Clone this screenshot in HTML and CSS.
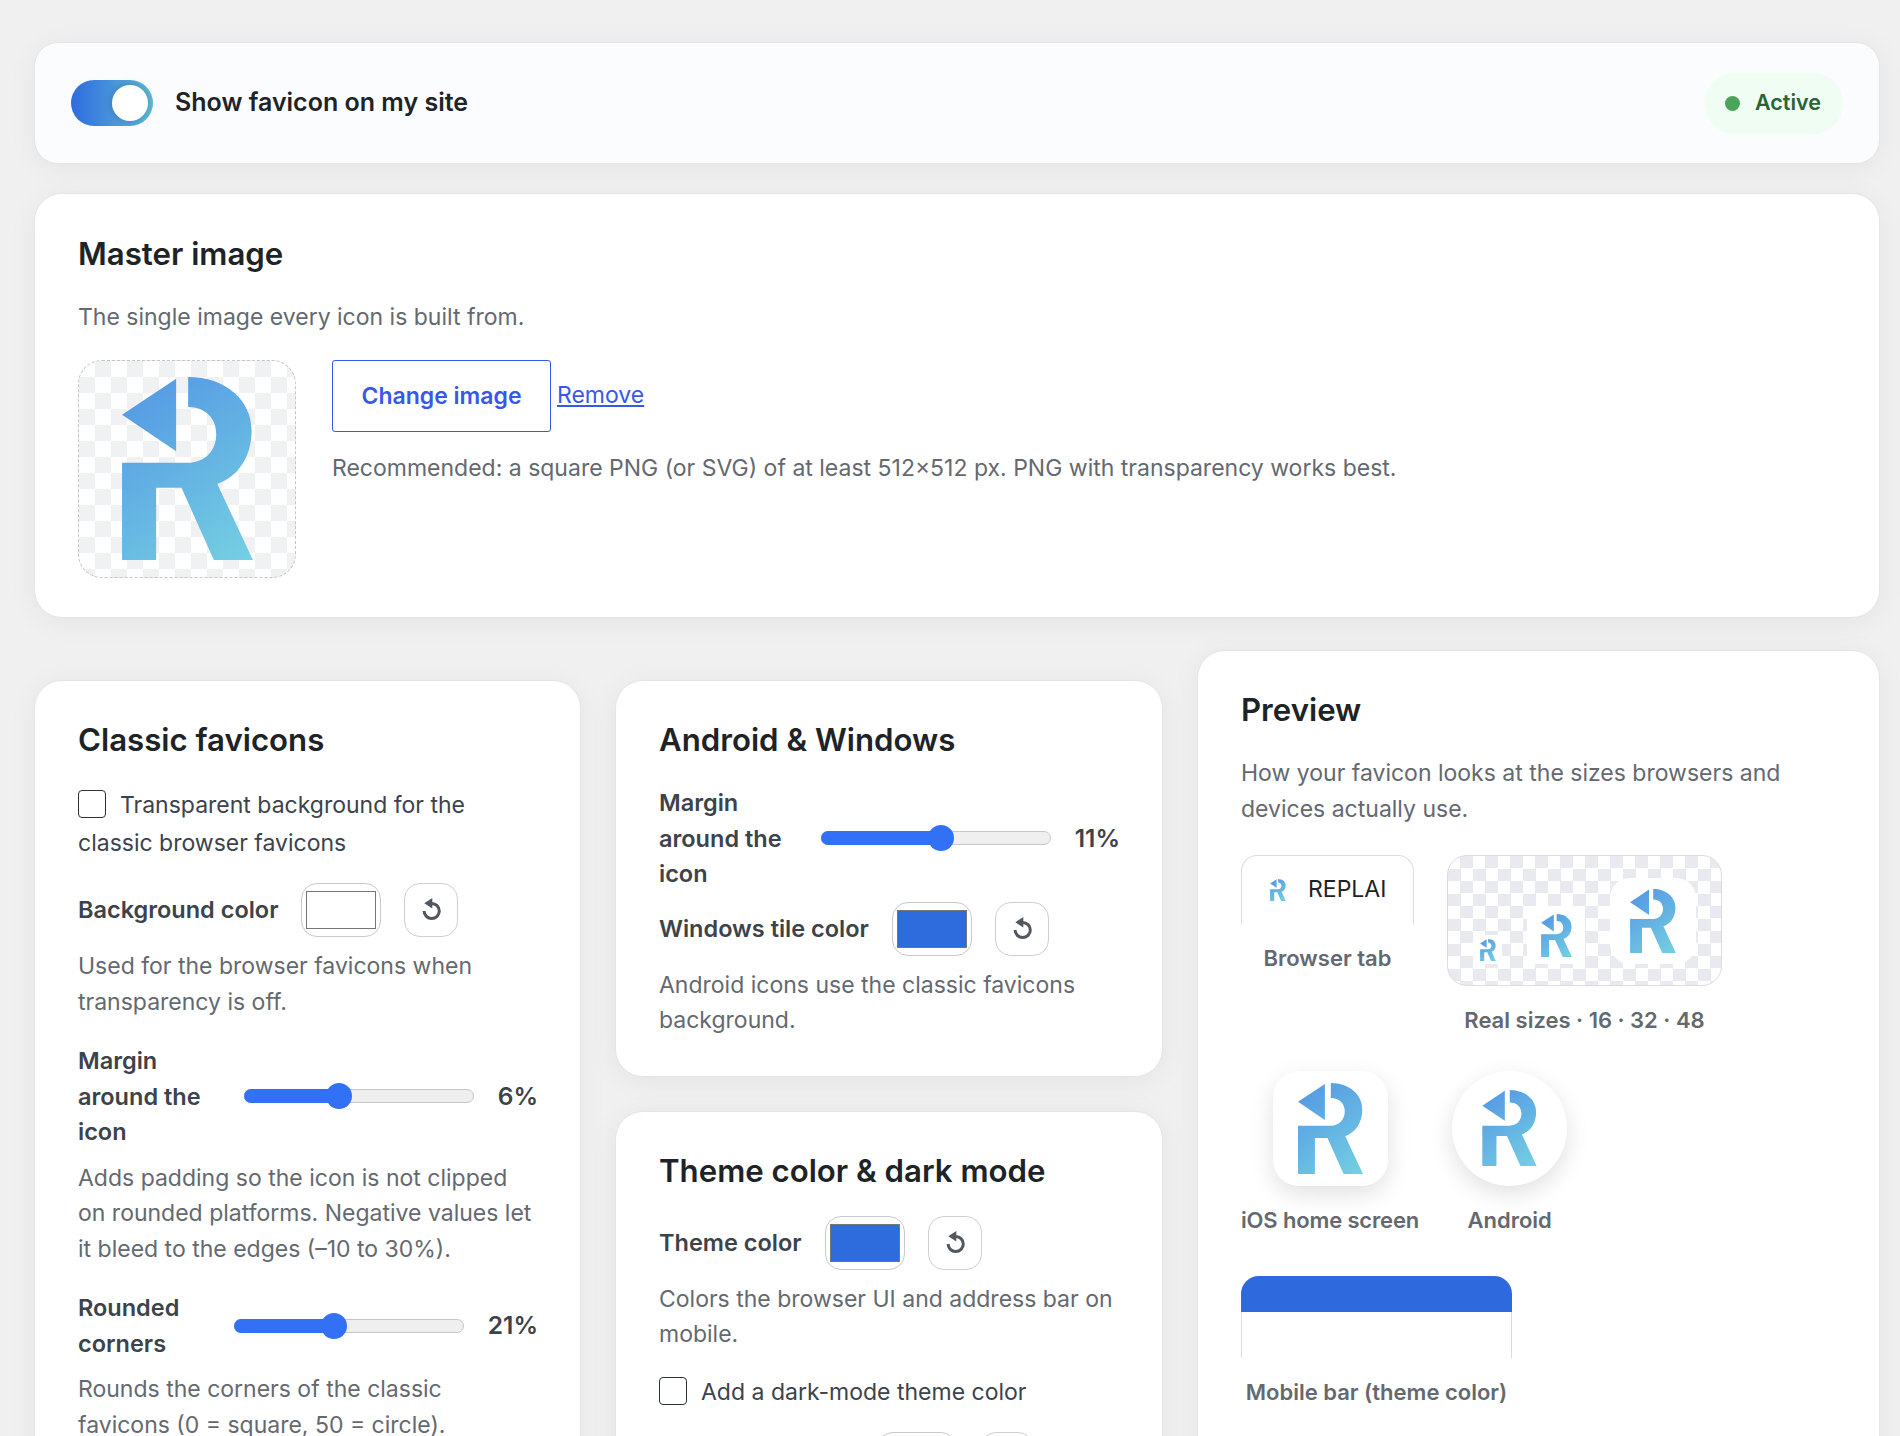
FILE: index.html
```html
<!DOCTYPE html>
<html lang="en">
<head>
    <meta charset="UTF-8">
    <meta name="viewport" content="width=device-width, initial-scale=1.0">
    <title>Favicon settings</title>
    <link rel="stylesheet" href="styles.css">
</head>
<body>
    <!-- shared drawings -->
    <svg class="defs" width="0" height="0">
        <defs>
            <linearGradient id="logo-grad" gradientUnits="userSpaceOnUse" x1="155" y1="80" x2="547" y2="628">
                <stop offset="0" stop-color="#5295e4"/>
                <stop offset="1" stop-color="#75d0e2"/>
            </linearGradient>
            <symbol id="logo" viewBox="155 80 392 548">
                <path fill="url(#logo-grad)" d="M155 193 317 85V302Z"/>
                <path fill="url(#logo-grad)" d="M353 80C465 80 543 150 543 240C543 320 500 380 440 400L547 628H430L333 412H257V628H155V337H350C405 337 437 300 437 250C437 205 405 170 353 170Z"/>
            </symbol>
            <symbol id="reset" viewBox="0 0 24 24">
                <path fill="none" stroke="currentColor" stroke-width="3" d="M12.7 5.4A7.6 7.6 0 1 1 5.1 13"/>
                <path fill="currentColor" d="M13.3 0V10.4L5.3 5.3Z"/>
            </symbol>
        </defs>
    </svg>

    <div class="page">
        <div class="card status-card">
            <span class="toggle"><span class="toggle-knob"></span></span>
            <span class="status-label">Show favicon on my site</span>
            <span class="pill"><span class="pill-dot"></span>Active</span>
        </div>

        <div class="card master-card">
            <h2>Master image</h2>
            <p class="help">The single image every icon is built from.</p>
            <div class="master-row">
                <div class="master-thumb checker">
                    <svg class="master-logo"><use href="#logo"/></svg>
                </div>
                <div class="master-side">
                    <div class="master-actions">
                        <button class="button-outline">Change image</button>
                        <a class="link" href="#">Remove</a>
                    </div>
                    <p class="help">Recommended: a square PNG (or SVG) of at least 512×512 px. PNG with transparency works best.</p>
                </div>
            </div>
        </div>

        <div class="columns">
            <div class="column column-low">
                <div class="card">
                    <h2>Classic favicons</h2>
                    <label class="check-line"><span class="checkbox"></span>Transparent background for the classic browser favicons</label>
                    <div class="field-row color-row">
                        <span class="field-label">Background color</span>
                        <span class="swatch-wrap"><span class="swatch swatch-white"></span></span>
                        <button class="reset"><svg class="reset-icon"><use href="#reset"/></svg></button>
                    </div>
                    <p class="help">Used for the browser favicons when transparency is off.</p>
                    <div class="field-row slider-row">
                        <span class="field-label label-narrow">Margin around the icon</span>
                        <span class="slider"><span class="slider-fill fill-a"></span><span class="slider-knob"></span></span>
                        <span class="slider-value">6%</span>
                    </div>
                    <p class="help">Adds padding so the icon is not clipped on rounded platforms. Negative values let it bleed to the edges (–10 to 30%).</p>
                    <div class="field-row slider-row">
                        <span class="field-label label-narrow">Rounded corners</span>
                        <span class="slider"><span class="slider-fill fill-b"></span><span class="slider-knob"></span></span>
                        <span class="slider-value">21%</span>
                    </div>
                    <p class="help">Rounds the corners of the classic favicons (0 = square, 50 = circle).</p>
                </div>
            </div>

            <div class="column column-low">
                <div class="card card-short">
                    <h2>Android &amp; Windows</h2>
                    <div class="field-row slider-row">
                        <span class="field-label label-narrow">Margin around the icon</span>
                        <span class="slider"><span class="slider-fill fill-c"></span><span class="slider-knob"></span></span>
                        <span class="slider-value">11%</span>
                    </div>
                    <div class="field-row color-row color-row-tight">
                        <span class="field-label">Windows tile color</span>
                        <span class="swatch-wrap"><span class="swatch"></span></span>
                        <button class="reset"><svg class="reset-icon"><use href="#reset"/></svg></button>
                    </div>
                    <p class="help">Android icons use the classic favicons background.</p>
                </div>
                <div class="card">
                    <h2>Theme color &amp; dark mode</h2>
                    <div class="field-row color-row">
                        <span class="field-label">Theme color</span>
                        <span class="swatch-wrap"><span class="swatch"></span></span>
                        <button class="reset"><svg class="reset-icon"><use href="#reset"/></svg></button>
                    </div>
                    <p class="help">Colors the browser UI and address bar on mobile.</p>
                    <label class="check-line check-line-low"><span class="checkbox"></span>Add a dark-mode theme color</label>
                    <div class="field-row color-row">
                        <span class="field-label">Dark theme color</span>
                        <span class="swatch-wrap"><span class="swatch swatch-dark"></span></span>
                        <button class="reset"><svg class="reset-icon"><use href="#reset"/></svg></button>
                    </div>
                </div>
            </div>

            <div class="column">
                <div class="card preview-card">
                    <h2>Preview</h2>
                    <p class="help">How your favicon looks at the sizes browsers and devices actually use.</p>
                    <div class="preview-grid">
                        <div class="preview-item">
                            <div class="browser-tab">
                                <svg class="tab-logo"><use href="#logo"/></svg>
                                <span>REPLAI</span>
                            </div>
                            <span class="caption">Browser tab</span>
                        </div>
                        <div class="preview-item">
                            <div class="real-sizes checker">
                                <span class="real-box real-16"><svg><use href="#logo"/></svg></span>
                                <span class="real-box real-32"><svg><use href="#logo"/></svg></span>
                                <span class="real-box real-48"><svg><use href="#logo"/></svg></span>
                            </div>
                            <span class="caption">Real sizes · 16 · 32 · 48</span>
                        </div>
                        <div class="preview-item">
                            <div class="home-icon home-ios"><svg><use href="#logo"/></svg></div>
                            <span class="caption caption-tight">iOS home screen</span>
                        </div>
                        <div class="preview-item">
                            <div class="home-icon home-android"><svg><use href="#logo"/></svg></div>
                            <span class="caption">Android</span>
                        </div>
                        <div class="preview-item mobile-item">
                            <div class="mobile-bar"><div class="mobile-bar-top"></div></div>
                            <span class="caption">Mobile bar (theme color)</span>
                        </div>
                    </div>
                </div>
            </div>
        </div>
    </div>
</body>
</html>
```

FILE: styles.css
```css
* {
    margin: 0;
    padding: 0;
    box-sizing: border-box;
}

html,
body {
    height: 1436px;
    overflow: hidden;
}

body {
    background-color: #f0f0f1;
    color: #3c434a;
    font-family: Inter, "Noto Sans", sans-serif;
    font-size: 23px;
    line-height: 35.5px;
}

.defs {
    position: absolute;
}

.page {
    padding: 42px 20px 0 34px;
}

.card {
    background-color: #fff;
    border: 1px solid #e4e5e8;
    border-radius: 28px;
    padding: 39px 43px;
    box-shadow: 0 4px 30px rgba(0, 0, 0, 0.05);
}

.card-short {
    padding-bottom: 37px;
}

h2 {
    color: #1d2327;
    font-size: 31.2px;
    font-weight: 600;
    line-height: 40px;
}

h2 + .help {
    margin-top: 26px;
}

.help {
    color: #646970;
}

/* 顶部开关 */
.status-card {
    display: flex;
    align-items: center;
    height: 122px;
    padding: 0 36px 0 36px;
    background-color: #fbfcfe;
    border-radius: 24px;
}

.toggle {
    display: flex;
    align-items: center;
    justify-content: flex-end;
    width: 82px;
    height: 46px;
    padding-right: 5px;
    border-radius: 23px;
    background: linear-gradient(90deg, #2f6bdf, #5fbcd8);
}

.toggle-knob {
    width: 36px;
    height: 36px;
    border-radius: 50%;
    background-color: #fff;
    box-shadow: 0 0 8px rgba(0, 0, 0, 0.2);
}

.status-label {
    margin-left: 22px;
    color: #1d2327;
    font-size: 25px;
    font-weight: 600;
}

.pill {
    display: flex;
    align-items: center;
    gap: 15px;
    height: 61px;
    margin-left: auto;
    padding: 0 22px 0 20px;
    border-radius: 31px;
    background-color: #effdf3;
    color: #2a6336;
    font-size: 21.5px;
    font-weight: 600;
}

.pill-dot {
    width: 15px;
    height: 15px;
    border-radius: 50%;
    background-color: #4aa557;
}

/* 主图 */
.master-card {
    margin-top: 29px;
    height: 425px;
    padding-top: 40px;
}

.master-row {
    display: flex;
    gap: 36px;
    margin-top: 24px;
}

.checker {
    background-color: #fff;
    background-image: conic-gradient(#f0f1f3 25%, #fff 0 50%, #f0f1f3 0 75%, #fff 0);
    background-size: 32px 32px;
}

.master-thumb {
    display: flex;
    align-items: center;
    justify-content: center;
    width: 218px;
    height: 218px;
    border: 1px dashed #c3c4cc;
    border-radius: 24px;
}

.master-logo {
    width: 131px;
    height: 183px;
}

.master-actions {
    display: flex;
    align-items: center;
    gap: 6px;
}

.button-outline {
    width: 219px;
    height: 72px;
    border: 1.5px solid #3858e9;
    border-radius: 3px;
    background-color: #fff;
    color: #3858e9;
    font: 600 23px Inter, sans-serif;
}

.link {
    color: #3858e9;
}

.master-side .help {
    margin-top: 19px;
}

/* 三列 */
.columns {
    display: grid;
    grid-template-columns: 547px 548px 683px;
    gap: 34px;
    align-items: start;
    margin-top: 32px;
}

.column {
    display: flex;
    flex-direction: column;
    gap: 34px;
}

.column-low {
    padding-top: 30px;
}

.check-line {
    display: block;
    margin-top: 26px;
    line-height: 38px;
}

.check-line-low {
    margin-top: 20px;
}

.checkbox {
    display: inline-block;
    width: 28px;
    height: 28px;
    margin-right: 14px;
    border: 1.5px solid #2c3338;
    border-radius: 4px;
    vertical-align: -5px;
}

.field-row {
    display: flex;
    align-items: center;
}

.field-label {
    font-size: 23.5px;
    font-weight: 600;
    flex-shrink: 0;
}

.label-narrow {
    width: 130px;
}

.color-row {
    gap: 23px;
    margin-top: 21px;
}

.color-row .field-label {
    line-height: 30px;
}

h2 + .color-row {
    margin-top: 25px;
}

.color-row + .help {
    margin-top: 12px;
}

.color-row-tight {
    margin-top: 10px;
}

.swatch-wrap {
    display: flex;
    align-items: center;
    justify-content: center;
    width: 80px;
    height: 54px;
    border: 1px solid #c9c9c9;
    border-radius: 16px;
    background-color: #fff;
}

.swatch {
    width: 70px;
    height: 38px;
    border: 1px solid #767676;
    background-color: #2e6bdd;
}

.swatch-white {
    background-color: #fff;
}

.swatch-dark {
    background-color: #1d2327;
}

.reset {
    display: flex;
    align-items: center;
    justify-content: center;
    width: 54px;
    height: 54px;
    border: 1px solid #cfcfcf;
    border-radius: 16px;
    background-color: #fff;
    color: #50575e;
}

.reset-icon {
    width: 24px;
    height: 24px;
}

.slider-row {
    gap: 24px;
    margin-top: 23px;
}

h2 + .slider-row {
    margin-top: 25px;
}

.slider-row + .help {
    margin-top: 11px;
}

.slider {
    position: relative;
    flex: none;
    width: 230px;
    height: 14px;
    margin-left: auto;
    border: 1px solid #c6c6c6;
    border-radius: 7px;
    background-color: #efefef;
}

.slider-fill {
    display: block;
    height: 14px;
    margin: -1px;
    border-radius: 7px;
    background-color: #3271f6;
}

.fill-a { width: 42%; }
.fill-b { width: 43%; }
.fill-c { width: 52%; }

/* 滑块圆点叠在轨道上 */
.slider-knob {
    position: absolute;
    top: -7px;
    width: 26px;
    height: 26px;
    border-radius: 50%;
    background-color: #3271f6;
}

.fill-a + .slider-knob { left: 81px; }
.fill-b + .slider-knob { left: 86px; }
.fill-c + .slider-knob { left: 106px; }

.slider-value {
    margin-right: -1px;
    font-size: 24.5px;
    font-weight: 600;
    flex-shrink: 0;
}

/* 预览 */
.preview-card {
    min-height: 900px;
}

.preview-grid {
    display: flex;
    flex-wrap: wrap;
    gap: 32px 33px;
    margin-top: 28px;
}

.preview-item {
    display: flex;
    flex-direction: column;
    align-items: center;
}

.mobile-item {
    margin-top: 6px;
}

.caption {
    margin-top: 17px;
    color: #646970;
    font-size: 22px;
    font-weight: 600;
}

.caption-tight {
    letter-spacing: -0.15px;
}

.browser-tab {
    display: flex;
    align-items: center;
    gap: 22px;
    width: 173px;
    height: 69px;
    padding-left: 28px;
    border: 1px solid #dcdcde;
    border-bottom: 0;
    border-radius: 16px 16px 0 0;
    color: #1d2327;
}

.tab-logo {
    width: 16px;
    height: 22px;
    filter: blur(0.3px);
}

.real-sizes {
    display: flex;
    align-items: flex-end;
    justify-content: center;
    gap: 25px;
    width: 275px;
    height: 131px;
    padding-bottom: 21px;
    border: 1px solid #dcdcde;
    border-radius: 20px;
    background-image: conic-gradient(#e9eaef 25%, #fff 0 50%, #e9eaef 0 75%, #fff 0);
    background-size: 25px 25px;
}

.real-box {
    display: flex;
    align-items: center;
    justify-content: center;
    background-color: #fff;
}

.real-box svg {
    filter: blur(0.4px);
}

.real-16 { width: 29px; height: 29px; }
.real-16 svg { width: 16px; height: 22px; }
.real-32 { width: 58px; height: 58px; border-radius: 3px; }
.real-32 svg { width: 31px; height: 43px; }
.real-48 { width: 86px; height: 86px; border-radius: 20px; }
.real-48 svg { width: 46px; height: 64px; }

.home-icon {
    display: flex;
    align-items: center;
    justify-content: center;
    width: 115px;
    height: 115px;
    background-color: #fff;
    box-shadow: 0 8px 24px rgba(0, 0, 0, 0.12);
}

.home-ios {
    border-radius: 26px;
}

.home-ios svg {
    width: 65px;
    height: 91px;
}

.home-android {
    border-radius: 50%;
}

.home-android svg {
    width: 55px;
    height: 76px;
}

.mobile-bar {
    width: 271px;
    height: 82px;
    border: 1px solid #dcdcde;
    border-top: 0;
    border-bottom: 0;
    border-radius: 18px 18px 0 0;
}

.mobile-bar-top {
    height: 36px;
    margin: 0 -1px;
    border-radius: 18px 18px 0 0;
    background-color: #2e69dd;
}
```
